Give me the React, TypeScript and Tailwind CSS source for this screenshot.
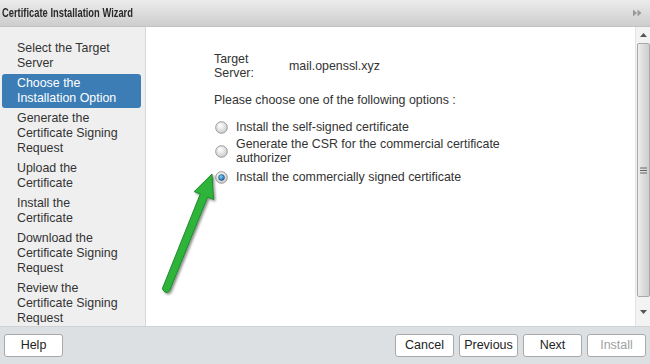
import React from "react";

const items: string[][] = [
  ["Select the Target", "Server"],
  ["Choose the", "Installation Option"],
  ["Generate the", "Certificate Signing", "Request"],
  ["Upload the", "Certificate"],
  ["Install the", "Certificate"],
  ["Download the", "Certificate Signing", "Request"],
  ["Review the", "Certificate Signing", "Request"],
];

function Radio({ checked }: { checked?: boolean }) {
  return (
    <svg width="13" height="13" viewBox="0 0 13 13" className="shrink-0">
      <defs>
        <radialGradient id={checked ? "rgc" : "rgu"} cx="0.4" cy="0.35" r="0.7">
          <stop offset="0" stopColor="#ffffff" />
          <stop offset="1" stopColor="#c9c9c9" />
        </radialGradient>
        <radialGradient id="dot" cx="0.4" cy="0.35" r="0.7">
          <stop offset="0" stopColor="#7fd0f5" />
          <stop offset="1" stopColor="#1a5f9a" />
        </radialGradient>
      </defs>
      <circle cx="6.5" cy="6.5" r="5.8" fill={`url(#${checked ? "rgc" : "rgu"})`} stroke="#8e8e8e" strokeWidth="0.9" />
      {checked && <circle cx="6.5" cy="6.5" r="3" fill="url(#dot)" stroke="#0f3f66" strokeWidth="0.5" />}
    </svg>
  );
}

function Btn({ label, disabled }: { label: string; disabled?: boolean }) {
  return (
    <div
      className={`w-[59px] h-[23px] flex items-center justify-center bg-white border border-[#a9a9a9] rounded-[3px] text-[12.5px] ${
        disabled ? "text-[#a0a0a0]" : "text-[#222]"
      }`}
    >
      {label}
    </div>
  );
}

export default function App() {
  return (
    <div
      className="relative w-[650px] h-[364px] flex flex-col overflow-hidden bg-white text-[#333]"
      style={{ fontFamily: '"Liberation Sans", Arial, sans-serif' }}
    >
      {/* Title bar */}
      <div className="h-[27px] shrink-0 flex items-center justify-between pl-[2px] pr-[8px] bg-gradient-to-b from-[#ececec] to-[#cdcdcd] border-b border-[#c2c2c2]">
        <span className="text-[13px] text-[#2a2a2a] font-bold inline-block origin-left scale-x-[0.72] whitespace-nowrap">
          Certificate Installation Wizard
        </span>
        <svg width="9" height="8" viewBox="0 0 9 8">
          <path d="M0 0.5 L4 4 L0 7.5 Z" fill="#9a9a9a" />
          <path d="M4.5 0.5 L8.5 4 L4.5 7.5 Z" fill="#9a9a9a" />
        </svg>
      </div>

      {/* Middle */}
      <div className="flex-1 flex min-h-0">
        {/* Sidebar */}
        <div className="w-[146px] shrink-0 bg-[#efefef] border-r border-[#d8d8d8] pt-[12px] text-[12.4px] leading-[15px]">
          {items.map((lines, i) => {
            const active = i === 1;
            return (
              <div
                key={i}
                className={`ml-[2px] mr-[4px] mb-px pl-[15px] pt-[2px] pb-[2px] rounded-[3px] ${
                  active ? "bg-[#3d7db5] text-white" : "text-[#333]"
                }`}
              >
                {lines.map((l, j) => (
                  <div key={j} className="whitespace-nowrap">
                    {l}
                  </div>
                ))}
              </div>
            );
          })}
        </div>

        {/* Content */}
        <div className="flex-1 bg-white pl-[68px] pt-[25px] text-[12.4px]">
          <div className="flex items-center">
            <div className="w-[75px] leading-[14px]">
              <div>Target</div>
              <div>Server:</div>
            </div>
            <div>mail.openssl.xyz</div>
          </div>
          <div className="mt-[13px] leading-[14px]">Please choose one of the following options :</div>
          <div className="mt-[13px] flex flex-col pl-[1px] leading-[14px]">
            <div className="flex items-center gap-[8px]">
              <Radio />
              <span>Install the self-signed certificate</span>
            </div>
            <div className="mt-[3px] flex items-center gap-[8px]">
              <Radio />
              <span className="w-[290px]">Generate the CSR for the commercial certificate authorizer</span>
            </div>
            <div className="mt-[5px] flex items-center gap-[8px]">
              <Radio checked />
              <span>Install the commercially signed certificate</span>
            </div>
          </div>
        </div>

        {/* Scrollbar */}
        <div className="w-[15px] shrink-0 bg-[#f3f3f3] flex flex-col items-center border-l border-[#e4e4e4]">
          <div className="h-[16px] w-full flex items-center justify-center">
            <svg width="7" height="4" viewBox="0 0 7 4">
              <path d="M0 4 L3.5 0 L7 4 Z" fill="#555" />
            </svg>
          </div>
          <div className="w-[13px] h-[254px] rounded-[2px] border border-[#a8a8a8] bg-gradient-to-r from-[#eeeeee] via-[#dcdcdc] to-[#cfcfcf] flex items-center justify-center">
            <svg width="7" height="7" viewBox="0 0 7 7">
              <path d="M0 1 H7 M0 3.5 H7 M0 6 H7" stroke="#666" strokeWidth="1" />
            </svg>
          </div>
          <div className="flex-1 w-full flex items-center justify-center">
            <svg width="7" height="4" viewBox="0 0 7 4">
              <path d="M0 0 L3.5 4 L7 0 Z" fill="#555" />
            </svg>
          </div>
        </div>
      </div>

      {/* Bottom bar */}
      <div className="h-[38px] shrink-0 bg-[#dde0e3] border-t border-[#cfd3d6] flex items-center pl-[4px] pr-[4px]">
        <Btn label="Help" />
        <div className="flex-1" />
        <div className="flex gap-[5px]">
          <Btn label="Cancel" />
          <Btn label="Previous" />
          <Btn label="Next" />
          <Btn label="Install" disabled />
        </div>
      </div>

      {/* Green arrow annotation */}
      <svg className="absolute left-0 top-0 pointer-events-none" width="650" height="364">
        <defs>
          <filter id="sh" x="-20%" y="-20%" width="140%" height="140%">
            <feDropShadow dx="1.5" dy="1.5" stdDeviation="1.2" floodColor="#000" floodOpacity="0.45" />
          </filter>
        </defs>
        <g filter="url(#sh)">
          <path
            d="M212 174 L213.5 199.5 L207.6 197.2 L169.5 291 Q166 295 162.3 288.8 L200.3 193.9 L194.2 191.6 Z"
            fill="#2fb43a"
            stroke="#1f8a2a"
            strokeWidth="1"
            strokeLinejoin="round"
          />
        </g>
      </svg>
    </div>
  );
}
